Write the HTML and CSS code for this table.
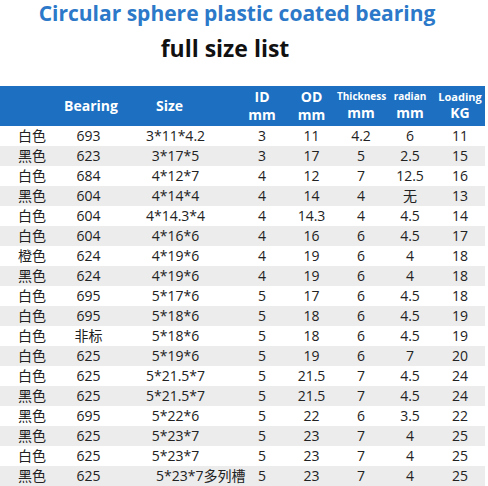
FILE: index.html
```html
<!DOCTYPE html>
<html lang="en">
<head>
    <meta charset="UTF-8">
    <title>Bearing full size list</title>
    <link rel="stylesheet" href="styles.css">
</head>
<body>
    <h1 class="title">Circular sphere plastic coated bearing</h1>
    <h2 class="subtitle">full size list</h2>
    <table class="sizes">
        <thead>
            <tr>
                <th class="c-color"></th>
                <th class="c-model">Bearing</th>
                <th class="c-size">Size</th>
                <th>ID<br>mm</th>
                <th>OD<br>mm</th>
                <th class="small">Thickness<br><span class="unit">mm</span></th>
                <th class="small">radian<br><span class="unit">mm</span></th>
                <th class="small">Loading<br><span class="unit">KG</span></th>
            </tr>
        </thead>
        <tbody>
            <tr><td>白色</td><td>693</td><td>3*11*4.2</td><td>3</td><td>11</td><td>4.2</td><td>6</td><td>11</td></tr>
            <tr><td>黑色</td><td>623</td><td>3*17*5</td><td>3</td><td>17</td><td>5</td><td>2.5</td><td>15</td></tr>
            <tr><td>白色</td><td>684</td><td>4*12*7</td><td>4</td><td>12</td><td>7</td><td>12.5</td><td>16</td></tr>
            <tr><td>黑色</td><td>604</td><td>4*14*4</td><td>4</td><td>14</td><td>4</td><td>无</td><td>13</td></tr>
            <tr><td>白色</td><td>604</td><td>4*14.3*4</td><td>4</td><td>14.3</td><td>4</td><td>4.5</td><td>14</td></tr>
            <tr><td>白色</td><td>604</td><td>4*16*6</td><td>4</td><td>16</td><td>6</td><td>4.5</td><td>17</td></tr>
            <tr><td>橙色</td><td>624</td><td>4*19*6</td><td>4</td><td>19</td><td>6</td><td>4</td><td>18</td></tr>
            <tr><td>黑色</td><td>624</td><td>4*19*6</td><td>4</td><td>19</td><td>6</td><td>4</td><td>18</td></tr>
            <tr><td>白色</td><td>695</td><td>5*17*6</td><td>5</td><td>17</td><td>6</td><td>4.5</td><td>18</td></tr>
            <tr><td>白色</td><td>695</td><td>5*18*6</td><td>5</td><td>18</td><td>6</td><td>4.5</td><td>19</td></tr>
            <tr><td>白色</td><td>非标</td><td>5*18*6</td><td>5</td><td>18</td><td>6</td><td>4.5</td><td>19</td></tr>
            <tr><td>白色</td><td>625</td><td>5*19*6</td><td>5</td><td>19</td><td>6</td><td>7</td><td>20</td></tr>
            <tr><td>白色</td><td>625</td><td>5*21.5*7</td><td>5</td><td>21.5</td><td>7</td><td>4.5</td><td>24</td></tr>
            <tr><td>黑色</td><td>625</td><td>5*21.5*7</td><td>5</td><td>21.5</td><td>7</td><td>4.5</td><td>24</td></tr>
            <tr><td>黑色</td><td>695</td><td>5*22*6</td><td>5</td><td>22</td><td>6</td><td>3.5</td><td>22</td></tr>
            <tr><td>黑色</td><td>625</td><td>5*23*7</td><td>5</td><td>23</td><td>7</td><td>4</td><td>25</td></tr>
            <tr><td>白色</td><td>625</td><td>5*23*7</td><td>5</td><td>23</td><td>7</td><td>4</td><td>25</td></tr>
            <tr><td>黑色</td><td>625</td><td class="left">5*23*7多列槽</td><td>5</td><td>23</td><td>7</td><td>4</td><td>25</td></tr>
        </tbody>
    </table>
</body>
</html>
```

FILE: styles.css
```css
* {
    margin: 0;
    padding: 0;
    box-sizing: border-box;
}

body {
    width: 488px;
    height: 486px;
    overflow: hidden;
    background: #fff;
    font-family: 'Open Sans', 'Noto Sans CJK SC', sans-serif;
    color: #222;
}

.title {
    height: 30px;
    padding-top: 1px;
    padding-right: 14px;
    text-align: center;
    font-size: 21px;
    font-weight: 700;
    line-height: 24px;
    color: #2c79c9;
    white-space: nowrap;
}

.subtitle {
    height: 56px;
    padding-top: 3px;
    padding-right: 38px;
    text-align: center;
    font-size: 23px;
    font-weight: 700;
    line-height: 30px;
    color: #111;
}

/* Table */
.sizes {
    width: 485px;
    border-collapse: collapse;
    table-layout: fixed;
}

.sizes th {
    height: 40px;
    background: #1c6fc1;
    color: #fff;
    font-size: 14px;
    font-weight: 700;
    line-height: 18px;
    text-align: center;
    white-space: nowrap;
}

.sizes th.small {
    font-size: 10px;
    line-height: 15px;
    padding-bottom: 2px;
}

.sizes th .unit {
    font-size: 14px;
    line-height: 18px;
}

.sizes th.c-color { width: 64px; }
.sizes th.c-model { width: 49px; }
.sizes th.c-size { width: 125px; padding-right: 12px; }
.sizes th:nth-child(4) { width: 48px; }
.sizes th:nth-child(5) { width: 51px; }
.sizes th:nth-child(6) { width: 48px; }
.sizes th:nth-child(7) { width: 50px; }
.sizes th:nth-child(8) { width: 50px; font-size: 11px; }

.sizes td {
    height: 20px;
    font-size: 14px;
    line-height: 20px;
    text-align: center;
    white-space: nowrap;
    color: #222;
}

.sizes tbody tr:nth-child(even) td {
    background: #ececec;
}

.sizes td.left {
    text-align: left;
    padding-left: 43px;
}
```
